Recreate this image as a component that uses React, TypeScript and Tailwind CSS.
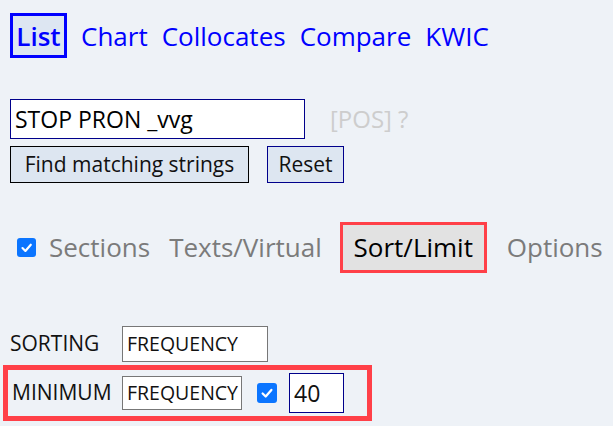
import React from "react";

function Check({ size }: { size: number }) {
  return (
    <span
      className="inline-flex items-center justify-center rounded-[3px] bg-[#0b75ff]"
      style={{ width: size, height: size }}
    >
      <svg width={size * 0.7} height={size * 0.7} viewBox="0 0 16 16">
        <path d="M3 8.5 L6.5 12 L13 4.5" fill="none" stroke="#fff" strokeWidth="2.6" strokeLinecap="round" strokeLinejoin="round" />
      </svg>
    </span>
  );
}

export default function App() {
  return (
    <div
      className="w-[613px] h-[426px] overflow-hidden bg-[#eef2f7] relative"
      style={{ fontFamily: '"Open Sans", "Noto Sans", sans-serif' }}
    >
      {/* nav */}
      <div className="pt-[13px] pl-[10px] flex items-center gap-[14px] text-[26px] text-[#0000ff] leading-none">
        <span className="w-[57px] h-[45px] border-[3px] border-[#0000ff] bg-[#dde6f2] flex items-center justify-center font-semibold">List</span>
        <span>Chart</span>
        <span>Collocates</span>
        <span>Compare</span>
        <span>KWIC</span>
      </div>

      {/* input */}
      <div className="mt-[41px] ml-[10px] flex items-center">
        <div className="w-[295px] h-[40px] bg-white border border-[#00008b] flex items-center pl-[4px] text-[23px] text-black">
          STOP PRON _vvg
        </div>
        <span className="ml-[25px] text-[24px] text-[#cdcdcd]">[POS]</span>
        <span className="ml-[6px] text-[24px] text-[#cdcdcd]">?</span>
      </div>
      <div className="mt-[7px] ml-[10px] flex items-center gap-[18px] text-[21px] text-[#111]">
        <div className="w-[239px] h-[37px] border border-black bg-[#dde6f1] flex items-center justify-center">Find matching strings</div>
        <div className="w-[77px] h-[37px] border border-[#00008b] bg-[#dde6f1] flex items-center justify-center">Reset</div>
      </div>

      {/* tabs */}
      <div className="mt-[39px] ml-[17px] flex items-center text-[26px] text-[#7b7b7b]">
        <Check size={19} />
        <span className="ml-[13px]">Sections</span>
        <span className="ml-[19px]">Texts/Virtual</span>
        <span className="ml-[18px] w-[147px] h-[51px] border-[3px] border-[#ff4048] bg-[#e2e2e2] text-black flex items-center justify-center">Sort/Limit</span>
        <span className="ml-[20px]">Options</span>
      </div>

      {/* sorting */}
      <div className="mt-[53px] ml-[10px] flex items-center text-[#111]">
        <span className="w-[112px] text-[21px]">SORTING</span>
        <div className="w-[146px] h-[36px] bg-white border border-[#777] flex items-center pl-[4px] text-[19.5px]">FREQUENCY</div>
      </div>
      <div className="mt-[3px] ml-[3px] w-[369px] h-[56px] border-[5px] border-[#ff4048] flex items-center text-[#111]">
        <span className="ml-[4px] w-[110px] text-[21px]">MINIMUM</span>
        <div className="w-[120px] h-[34px] bg-white border border-[#777] flex items-center pl-[4px] text-[19.5px]">FREQUENCY</div>
        <span className="ml-[15px] flex"><Check size={20} /></span>
        <div className="ml-[12px] w-[55px] h-[40px] bg-white border border-[#00008b] flex items-center pl-[4px] text-[23px]">40</div>
      </div>
    </div>
  );
}
